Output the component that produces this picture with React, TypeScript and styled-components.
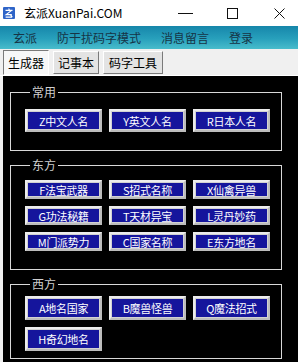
import React from "react";
import styled, { createGlobalStyle } from "styled-components";

const GlobalStyle = createGlobalStyle`
  html, body {
    margin: 0;
    padding: 0;
    background: #f0f0f0;
  }
  body {
    font-family: "Noto Sans CJK SC", "Noto Sans", sans-serif;
    font-size: 12px;
  }
`;

const Window = styled("div")`
  width: 298px;
  height: 362px;
  display: flex;
  flex-direction: column;
  overflow: hidden;
  background: #f0f0f0;
`;

const TitleBar = styled("div")`
  height: 26px;
  flex: none;
  display: flex;
  align-items: center;
  background: #fff;
  overflow: hidden;
`;

const AppIcon = styled("svg")`
  margin-left: 3px;
  width: 12px;
  height: 12px;
  flex: none;
`;

const Title = styled("span")`
  margin-left: 9px;
  font-size: 12px;
  color: #000;
  flex: 1;
  line-height: 26px;
`;

const Caption = styled("div")`
  display: flex;
  margin-right: -5px;
`;

const CaptionButton = styled("div")`
  width: 47px;
  height: 26px;
  display: flex;
  align-items: center;
  justify-content: center;
`;

const MenuBar = styled("div")`
  height: 23px;
  flex: none;
  display: flex;
  align-items: center;
  padding-left: 3px;
  background: linear-gradient(180deg, #1686aa 0%, #28a0bc 55%, #48bccb 100%);
`;

const MenuItem = styled("span")`
  padding: 0 10px;
  font-size: 12px;
  color: #163446;
  line-height: 23px;
`;

const TabRow = styled("div")`
  height: 27px;
  flex: none;
  display: flex;
  align-items: flex-start;
  gap: 4px;
  padding: 1px 0 0 3px;
  box-sizing: border-box;
  border-bottom: 1px solid #ffffff;
`;

const Tab = styled("div")<{ $active?: boolean; $w: number }>`
  width: ${p => p.$w}px;
  height: ${p => (p.$active ? 25 : 23)}px;
  margin-top: ${p => (p.$active ? 0 : 1)}px;
  box-sizing: border-box;
  display: flex;
  align-items: center;
  justify-content: center;
  font-size: 12px;
  color: #000;
  background: ${p => (p.$active ? "#f7f7f7" : "#e3e3e3")};
  border: 1px solid;
  border-color: ${p =>
    p.$active ? "#7a7a7a #ffffff #ffffff #7a7a7a" : "#ffffff #7a7a7a #7a7a7a #ffffff"};
`;

const Panel = styled("div")`
  flex: 1;
  margin-left: 3px;
  background: #000;
  padding: 9px 0 0 7px;
  display: flex;
  flex-direction: column;
`;

const Group = styled("fieldset")<{ $top: number; $pt: number; $pb: number }>`
  margin: ${p => p.$top}px 0 0 0;
  width: 272px;
  box-sizing: border-box;
  border: 1px solid #d8d8d8;
  padding: ${p => p.$pt}px 0 ${p => p.$pb}px 14px;
  min-width: 0;
`;

const Legend = styled("legend")`
  margin-left: 5px;
  padding: 0 2px;
  font-size: 12px;
  line-height: 14px;
  color: #cfcfcf;
`;

const ButtonGrid = styled("div")<{ $rowGap: number }>`
  display: grid;
  grid-template-columns: repeat(3, 77px);
  column-gap: 7px;
  row-gap: ${p => p.$rowGap}px;
`;

const NameButton = styled("div")<{ $h: number }>`
  height: ${p => p.$h}px;
  box-sizing: border-box;
  display: flex;
  align-items: center;
  justify-content: center;
  background: #15159c;
  border: 2px solid;
  border-color: #ececec #bcbcbc #bcbcbc #ececec;
  box-shadow: inset 0 0 0 1px #d2d2d2;
  color: #fff;
  font-size: 11px;
  letter-spacing: -0.3px;
  white-space: nowrap;
`;

interface GroupDef {
  title: string;
  top: number;
  pt: number;
  pb: number;
  h: number;
  rowGap: number;
  items: string[];
}

const groups: GroupDef[] = [
  { title: "常用", top: 0, pt: 10, pb: 18, h: 23, rowGap: 7, items: ["Z中文人名", "Y英文人名", "R日本人名"] },
  {
    title: "东方",
    top: 7,
    pt: 8,
    pb: 18,
    h: 19,
    rowGap: 7,
    items: ["F法宝武器", "S招式名称", "X仙禽异兽", "G功法秘籍", "T天材异宝", "L灵丹妙药", "M门派势力", "C国家名称", "E东方地名"],
  },
  { title: "西方", top: 7, pt: 5, pb: 7, h: 24, rowGap: 7, items: ["A地名国家", "B魔兽怪兽", "Q魔法招式", "H奇幻地名"] },
];

const App: React.FC = () => {
  return (
    <Window>
      <GlobalStyle />
      <TitleBar>
        <AppIcon viewBox="0 0 12 12">
          <rect width="12" height="12" rx="1" fill="#2e64c8" />
          <path d="M5.5 1.6 L6.5 2.6 M2.5 3.4 H9.5 M8.3 3.6 L3.2 7.6 H8.8 M7.6 7.8 L9.2 10.2 M2.6 10.1 H9.2" stroke="#fff" strokeWidth="1.2" fill="none" />
        </AppIcon>
        <Title>玄派XuanPai.COM</Title>
        <Caption>
          <CaptionButton>
            <svg width="16" height="10" viewBox="0 0 16 10">
              <path d="M0 5.5 H15" stroke="#111" strokeWidth="1" />
            </svg>
          </CaptionButton>
          <CaptionButton>
            <svg width="11" height="11" viewBox="0 0 11 11">
              <rect x="0.5" y="0.5" width="10" height="10" stroke="#111" strokeWidth="1" fill="none" />
            </svg>
          </CaptionButton>
          <CaptionButton>
            <svg width="11" height="11" viewBox="0 0 11 11">
              <path d="M0.5 0.5 L10.5 10.5 M10.5 0.5 L0.5 10.5" stroke="#111" strokeWidth="1" />
            </svg>
          </CaptionButton>
        </Caption>
      </TitleBar>
      <MenuBar>
        <MenuItem>玄派</MenuItem>
        <MenuItem>防干扰码字模式</MenuItem>
        <MenuItem>消息留言</MenuItem>
        <MenuItem>登录</MenuItem>
      </MenuBar>
      <TabRow>
        <Tab $active $w={46}>生成器</Tab>
        <Tab $w={46}>记事本</Tab>
        <Tab $w={60}>码字工具</Tab>
      </TabRow>
      <Panel>
        {groups.map(g => (
          <Group key={g.title} $top={g.top} $pt={g.pt} $pb={g.pb}>
            <Legend>{g.title}</Legend>
            <ButtonGrid $rowGap={g.rowGap}>
              {g.items.map(item => (
                <NameButton key={item} $h={g.h}>
                  {item}
                </NameButton>
              ))}
            </ButtonGrid>
          </Group>
        ))}
      </Panel>
    </Window>
  );
};

export default App;
